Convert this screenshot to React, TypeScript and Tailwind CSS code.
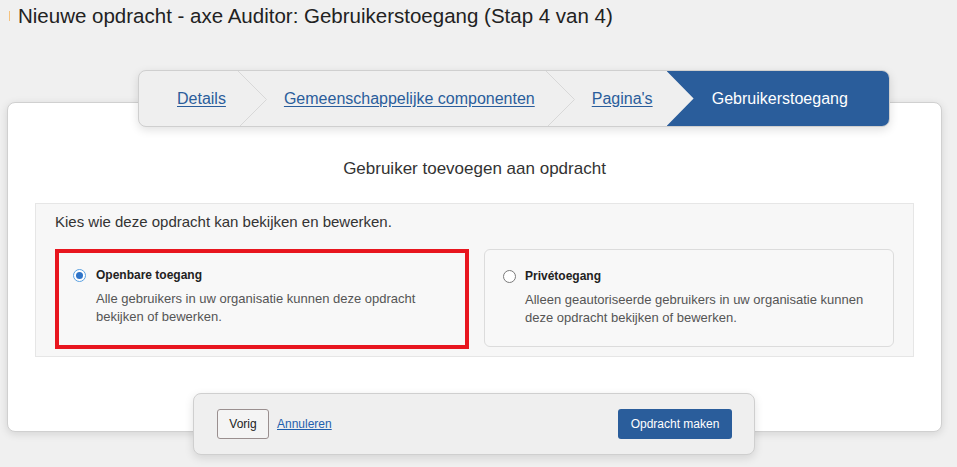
import React from 'react'

const font = "font-['Liberation_Sans',Arial,sans-serif]"

function Chevron() {
  return (
    <svg className="w-[29px] h-[57px] shrink-0" viewBox="0 0 29 57" fill="none">
      <polyline points="0,0 28.5,28.5 0,57" stroke="#d8d8d8" strokeWidth="1" />
    </svg>
  )
}

function Radio({ checked }: { checked: boolean }) {
  return checked ? (
    <span className="w-[13px] h-[13px] rounded-full border border-[#5aa0e0] bg-white flex items-center justify-center shrink-0">
      <span className="w-[7px] h-[7px] rounded-full bg-[#2f74c8]" />
    </span>
  ) : (
    <span className="w-[13px] h-[13px] rounded-full border border-[#7a7a7a] bg-white shrink-0" />
  )
}

export default function App() {
  return (
    <div className={`w-[957px] h-[467px] bg-[#f0f0f0] overflow-hidden ${font}`}>
      {/* Title */}
      <div className="flex items-center h-[30px] pt-[1px]">
        <span className="w-px h-[10px] bg-[#f5c27e] ml-[9px] mr-[8px]" />
        <h1 className="text-[20.5px] leading-[26px] text-[#222]">
          Nieuwe opdracht - axe Auditor: Gebruikerstoegang (Stap 4 van 4)
        </h1>
      </div>

      <div className="pl-[7px] pr-[15px] pt-[40px]">
        {/* Stepper */}
        <div className="relative z-10 ml-[131px] w-[752px] h-[57px] flex items-stretch bg-[#efefef] border border-[#cfcfcf] rounded-[8px] overflow-hidden shadow-[0_3px_10px_rgba(0,0,0,0.12)]">
          <div className="flex items-center pl-[38px] pr-[12px]">
            <a className="text-[16px] text-[#2a5d9b] underline underline-offset-2">Details</a>
          </div>
          <Chevron />
          <div className="flex items-center pl-[17px] pr-[11px]">
            <a className="text-[16px] text-[#2a5d9b] underline underline-offset-2 whitespace-nowrap">
              Gemeenschappelijke componenten
            </a>
          </div>
          <Chevron />
          <div className="flex items-center pl-[17px] pr-[14px]">
            <a className="text-[16px] text-[#2a5d9b] underline underline-offset-2">Pagina's</a>
          </div>
          <div className="flex-1 bg-[#2a5d9b] flex items-center justify-center pl-[4px] [clip-path:polygon(0_0,100%_0,100%_100%,0_100%,27px_50%)]">
            <span className="text-[16px] text-white">Gebruikerstoegang</span>
          </div>
        </div>

        {/* Card */}
        <div className="-mt-[25px] h-[330px] bg-white border border-[#d0d0d0] rounded-[8px] shadow-[0_2px_8px_rgba(0,0,0,0.12)] pt-[56px] px-[27px]">
          <h2 className="text-center text-[17px] leading-[20px] text-[#333]">
            Gebruiker toevoegen aan opdracht
          </h2>

          <div className="mt-[24px] bg-[#f7f7f7] border border-[#e6e6e6] pl-[19px] pr-[19px] pt-[8px] pb-[7px]">
            <p className="text-[15px] leading-[20px] text-[#333]">
              Kies wie deze opdracht kan bekijken en bewerken.
            </p>
            <div className="mt-[17px] flex gap-[15px]">
              <div className="w-[414px] h-[100px] border-[4px] border-[#e8161f] bg-[#f8f8f8] pl-[14px] pt-[14px]">
                <div className="flex items-center gap-[10px]">
                  <Radio checked />
                  <span className="text-[12px] leading-[16px] font-bold text-[#222]">Openbare toegang</span>
                </div>
                <p className="mt-[7px] ml-[23px] text-[13px] leading-[18px] text-[#555]">
                  Alle gebruikers in uw organisatie kunnen deze opdracht
                  <br />
                  bekijken of bewerken.
                </p>
              </div>
              <div className="flex-1 h-[98px] border border-[#dcdcdc] rounded-[6px] bg-[#f8f8f8] pl-[18px] pt-[18px]">
                <div className="flex items-center gap-[9px]">
                  <Radio checked={false} />
                  <span className="text-[12px] leading-[16px] font-bold text-[#222]">Privétoegang</span>
                </div>
                <p className="mt-[7px] ml-[22px] text-[13px] leading-[18px] text-[#555]">
                  Alleen geautoriseerde gebruikers in uw organisatie kunnen
                  <br />
                  deze opdracht bekijken of bewerken.
                </p>
              </div>
            </div>
          </div>
        </div>

        {/* Footer bar */}
        <div className="relative z-10 -mt-[39px] ml-[186px] w-[562px] h-[62px] bg-[#efefef] border border-[#cfcfcf] rounded-[8px] shadow-[0_3px_10px_rgba(0,0,0,0.12)] flex items-center pl-[23px] pr-[22px]">
          <button className="h-[30px] w-[52px] border border-[#9a8f8f] rounded-[3px] bg-[#f4f4f4] text-[12px] text-[#222]">
            Vorig
          </button>
          <a className="ml-[8px] text-[12px] text-[#1f5fae] underline">Annuleren</a>
          <button className="ml-auto h-[30px] w-[114px] rounded-[3px] bg-[#2a5d9b] text-[12px] text-white">
            Opdracht maken
          </button>
        </div>
      </div>
    </div>
  )
}
